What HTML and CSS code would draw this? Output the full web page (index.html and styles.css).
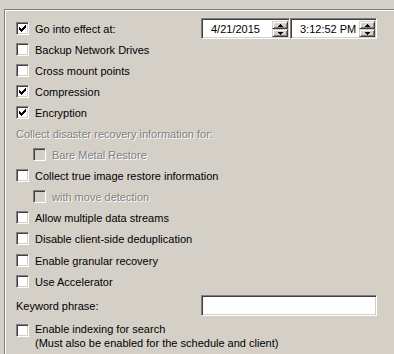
FILE: index.html
```html
<!DOCTYPE html>
<html>
	<head>
		<meta charset="utf-8">
		<title>Options</title>
		<link rel="stylesheet" href="styles.css">
	</head>
	<body>
		<div class="group">
			<div class="row">
				<span class="cb"><svg width="11" height="11" viewBox="0 0 11 11"><path d="M2 4h1v3h-1z M3 5h1v3h-1z M4 6h1v3h-1z M5 5h1v3h-1z M6 4h1v3h-1z M7 3h1v3h-1z M8 2h1v3h-1z"/></svg></span>
				<span>Go into effect at:</span>
				<div class="pickers">
					<div class="field date">
						<span class="val">4/21/2015</span>
						<span class="spinner">
							<span class="btn"><svg width="5" height="3" viewBox="0 0 5 3"><path d="M2 0h1v1h1v1h1v1h-5v-1h1v-1h1z"/></svg></span>
							<span class="btn"><svg width="5" height="3" viewBox="0 0 5 3"><path d="M0 0h5v1h-1v1h-1v1h-1v-1h-1v-1h-1z"/></svg></span>
						</span>
					</div>
					<div class="field time">
						<span class="val">3:12:52 PM</span>
						<span class="spinner">
							<span class="btn"><svg width="5" height="3" viewBox="0 0 5 3"><path d="M2 0h1v1h1v1h1v1h-5v-1h1v-1h1z"/></svg></span>
							<span class="btn"><svg width="5" height="3" viewBox="0 0 5 3"><path d="M0 0h5v1h-1v1h-1v1h-1v-1h-1v-1h-1z"/></svg></span>
						</span>
					</div>
				</div>
			</div>
			<div class="row"><span class="cb"></span><span>Backup Network Drives</span></div>
			<div class="row"><span class="cb"></span><span>Cross mount points</span></div>
			<div class="row">
				<span class="cb"><svg width="11" height="11" viewBox="0 0 11 11"><path d="M2 4h1v3h-1z M3 5h1v3h-1z M4 6h1v3h-1z M5 5h1v3h-1z M6 4h1v3h-1z M7 3h1v3h-1z M8 2h1v3h-1z"/></svg></span>
				<span>Compression</span>
			</div>
			<div class="row">
				<span class="cb"><svg width="11" height="11" viewBox="0 0 11 11"><path d="M2 4h1v3h-1z M3 5h1v3h-1z M4 6h1v3h-1z M5 5h1v3h-1z M6 4h1v3h-1z M7 3h1v3h-1z M8 2h1v3h-1z"/></svg></span>
				<span>Encryption</span>
			</div>
			<div class="row dim">Collect disaster recovery information for:</div>
			<div class="row sub dim"><span class="cb off"></span><span>Bare Metal Restore</span></div>
			<div class="row"><span class="cb"></span><span>Collect true image restore information</span></div>
			<div class="row sub dim"><span class="cb off"></span><span>with move detection</span></div>
			<div class="row"><span class="cb"></span><span>Allow multiple data streams</span></div>
			<div class="row"><span class="cb"></span><span>Disable client-side deduplication</span></div>
			<div class="row gap1"><span class="cb"></span><span>Enable granular recovery</span></div>
			<div class="row"><span class="cb"></span><span>Use Accelerator</span></div>
			<div class="row keyword">
				<span>Keyword phrase:</span>
				<div class="field wide"></div>
			</div>
			<div class="multi">
				<span class="cb"></span>
				<span>Enable indexing for search<br>(Must also be enabled for the schedule and client)</span>
			</div>
		</div>
	</body>
</html>
```
FILE: styles.css
```css
*{margin: 0;padding: 0;box-sizing: border-box;}
html,body{width: 394px;height: 354px;overflow: hidden;}
body{background: #d4d0c8;
	font: 11px "Liberation Sans", Arial, sans-serif;
	color: #000;
	padding: 9px 0 0 4px;
	}
.group{width: 390px;
	height: 345px;
	overflow: hidden;
	border-top: 1px solid #808080;
	border-left: 1px solid #808080;
	box-shadow: inset 1px 1px 0 #fff;
	padding: 8px 0 0 11px;
	}
.row{display: flex;align-items: center;height: 21px;width: 361px;}
.row.sub{padding-left: 17px;}
.row.gap1{margin-top: 1px;}
.row.keyword{margin-top: 3px;}
.dim{color: #808080;text-shadow: 1px 1px 0 #fff;}

.cb{width: 13px;height: 13px;flex: none;
	margin-right: 6px;
	border: 1px solid;
	border-color: #808080 #fff #fff #808080;
	box-shadow: inset 1px 1px 0 #404040, inset -1px -1px 0 #d4d0c8;
	background: #fff;
	}
.cb svg{display: block;}
.cb.off{background: #d4d0c8;}

.pickers{display: flex;margin-left: auto;}
.field{height: 21px;
	display: flex;
	align-items: center;
	border: 1px solid;
	border-color: #808080 #fff #fff #808080;
	box-shadow: inset 1px 1px 0 #404040, inset -1px -1px 0 #d4d0c8;
	background: #fff;
	}
.field.date{width: 89px;}
.field.time{width: 87px;}
.field.wide{width: 176px;margin-left: auto;}
.val{flex: 1;padding-left: 9px;}
.spinner{display: flex;flex-direction: column;margin: 1px 1px 0 0;}
.btn{width: 16px;height: 8px;
	display: flex;
	align-items: center;
	justify-content: center;
	border: 1px solid;
	border-color: #d4d0c8 #404040 #404040 #d4d0c8;
	box-shadow: inset 1px 1px 0 #fff, inset -1px -1px 0 #808080;
	background: #d4d0c8;
	}
.btn svg{display: block;}

.multi{display: flex;align-items: flex-start;margin-top: 6px;line-height: 14px;}
.multi .cb{margin-top: 2px;}
```
